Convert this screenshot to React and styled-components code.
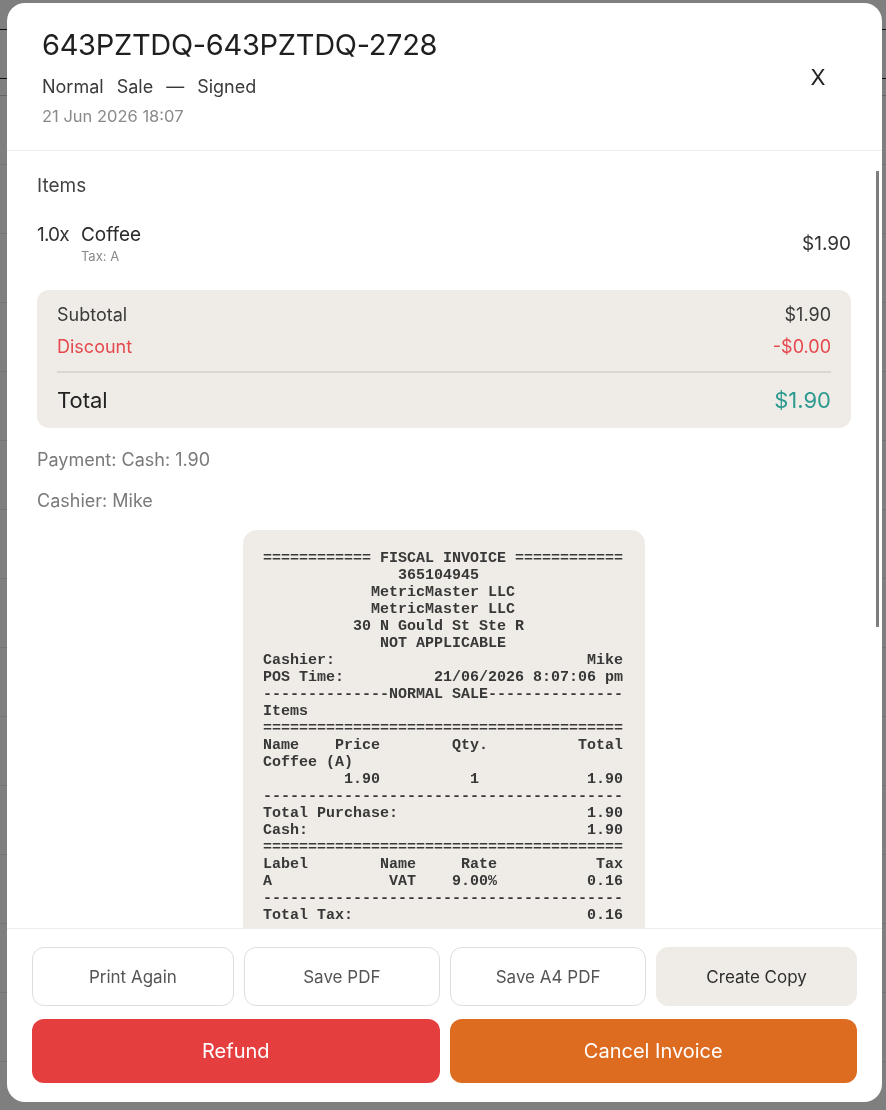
import React from "react";
import styled, { createGlobalStyle } from "styled-components";

const GlobalStyle = createGlobalStyle`
  html, body { margin: 0; padding: 0; }
  body {
    background: #ffffff;
    font-family: Inter, "Noto Sans", sans-serif;
    color: #2d2d2d;
    overflow: hidden;
  }
`;

const Page = styled.div`
  display: flex;
  flex-direction: column;
  height: 1110px;
  background: #ffffff;
`;

const PageRow = styled.div`
  height: ${(p) => p.h}px;
  border-bottom: 1px solid ${(p) => p.line};
  flex-shrink: 0;
`;

const Overlay = styled.div`
  position: fixed;
  inset: 0;
  background: rgba(0, 0, 0, 0.5);
  display: flex;
  align-items: flex-start;
  padding: 3px 4px 0 7px;
`;

const Modal = styled.div`
  width: 875px;
  height: 1099px;
  background: #ffffff;
  border-radius: 18px;
  display: flex;
  flex-direction: column;
  overflow: hidden;
`;

const Header = styled.div`
  display: flex;
  justify-content: space-between;
  align-items: flex-start;
  padding: 22px 44px 0 35px;
  height: 148px;
  box-sizing: border-box;
  border-bottom: 1px solid #ececec;
  flex-shrink: 0;
`;

const HeadText = styled.div`
  display: flex;
  flex-direction: column;
`;

const Title = styled.h1`
  margin: 0;
  font-size: 29px;
  font-weight: 400;
  line-height: 40px;
  color: #1f1f1f;
  letter-spacing: -0.3px;
`;

const Status = styled.div`
  display: flex;
  gap: 13px;
  margin-top: 9px;
  font-size: 18px;
  line-height: 26px;
  color: #3a3a3a;
`;

const DateLine = styled.div`
  margin-top: 5px;
  font-size: 16.5px;
  line-height: 22px;
  color: #8a8a8a;
`;

const CloseButton = styled.button`
  width: 40px;
  height: 40px;
  margin-top: 32px;
  border: none;
  background: transparent;
  font-family: Inter, sans-serif;
  font-size: 22px;
  color: #222;
  cursor: pointer;
  padding: 0;
`;

const BodyFrame = styled.div`
  flex: 1;
  min-height: 0;
  position: relative;
  display: flex;
`;

const Body = styled.div`
  flex: 1;
  overflow-y: auto;
  padding: 22px 31px 20px 30px;
  scrollbar-width: none;
  &::-webkit-scrollbar { display: none; }
`;

const ScrollThumb = styled.div`
  position: absolute;
  right: 3px;
  top: 20px;
  width: 3px;
  height: 456px;
  background: #7d7d7d;
  pointer-events: none;
`;

const SectionLabel = styled.div`
  font-size: 19px;
  line-height: 26px;
  color: #444;
`;

const ItemRow = styled.div`
  display: flex;
  justify-content: space-between;
  align-items: flex-start;
  margin-top: 23px;
`;

const ItemLeft = styled.div`
  display: flex;
  gap: 12px;
`;

const Qty = styled.span`
  font-size: 19px;
  line-height: 26px;
  color: #333;
  letter-spacing: -0.8px;
`;

const ItemName = styled.div`
  display: flex;
  flex-direction: column;
`;

const Name = styled.span`
  font-size: 19px;
  line-height: 26px;
  color: #2a2a2a;
`;

const TaxNote = styled.span`
  font-size: 13px;
  line-height: 16px;
  color: #8a8a8a;
`;

const Price = styled.span`
  font-size: 19px;
  line-height: 26px;
  margin-top: 9px;
  color: #333;
`;

const Summary = styled.div`
  margin-top: 26px;
  background: #efece7;
  border-radius: 12px;
  padding: 9px 20px 11px;
  display: flex;
  flex-direction: column;
`;

const SumRow = styled.div`
  display: flex;
  justify-content: space-between;
  align-items: center;
  font-size: ${(p) => (p.big ? 22 : 18)}px;
  line-height: ${(p) => (p.big ? 34 : 32)}px;
  color: ${(p) => p.color || "#3a3a3a"};
`;

const SumValue = styled.span`
  color: ${(p) => p.color || "inherit"};
`;

const Divider = styled.div`
  height: 2px;
  background: #d9d5d0;
  margin: 8px 0 10px;
`;

const Meta = styled.div`
  font-size: 18px;
  line-height: 26px;
  color: #7a7a7a;
  margin-top: ${(p) => p.mt}px;
`;

const ReceiptWrap = styled.div`
  display: flex;
  justify-content: center;
  margin-top: 16px;
`;

const Receipt = styled.pre`
  margin: 0;
  width: 402px;
  box-sizing: border-box;
  background: #efece7;
  border-radius: 14px;
  padding: 20px 20px 24px;
  font-family: "Liberation Mono", "Courier New", monospace;
  font-size: 15px;
  line-height: 17px;
  color: #383838;
  font-weight: 700;
  white-space: pre;
`;

const Footer = styled.div`
  flex-shrink: 0;
  border-top: 1px solid #ececec;
  padding: 18px 25px 19px;
  display: flex;
  flex-direction: column;
  gap: 13px;
`;

const ButtonRow = styled.div`
  display: flex;
  gap: 10px;
`;

const GhostButton = styled.button`
  flex: ${(p) => p.grow} 1 0;
  min-width: 0;
  height: 59px;
  border-radius: 12px;
  border: 1px solid ${(p) => (p.filled ? "#efece7" : "#dedede")};
  background: ${(p) => (p.filled ? "#efece7" : "#ffffff")};
  font-family: Inter, sans-serif;
  font-size: 17px;
  color: ${(p) => (p.filled ? "#2f2f2f" : "#555")};
  cursor: pointer;
  padding: 0 8px;
`;

const ActionButton = styled.button`
  flex: 1 1 0;
  height: 64px;
  border-radius: 12px;
  border: none;
  background: ${(p) => p.bg};
  color: #ffffff;
  font-family: Inter, sans-serif;
  font-size: 20px;
  cursor: pointer;
`;

const W = 40;
const lr = (l, r) => l + " ".repeat(Math.max(1, W - l.length - r.length)) + r;
const center = (t) => " ".repeat(Math.floor((W - t.length) / 2)) + t;
const cols = (parts) => {
  let s = "";
  parts.forEach(([text, col]) => {
    if (s.length < col) s += " ".repeat(col - s.length);
    s += text;
  });
  return s;
};
const rule = (c) => c.repeat(W);

const receiptLines = [
  "============ FISCAL INVOICE ============",
  center("365104945"),
  center("MetricMaster LLC"),
  center("MetricMaster LLC"),
  center("30 N Gould St Ste R"),
  center("NOT APPLICABLE"),
  lr("Cashier:", "Mike"),
  lr("POS Time:", "21/06/2026 8:07:06 pm"),
  "--------------NORMAL SALE---------------",
  "Items",
  rule("="),
  cols([["Name", 0], ["Price", 8], ["Qty.", 21], ["Total", 35]]),
  "Coffee (A)",
  cols([["1.90", 9], ["1", 23], ["1.90", 36]]),
  rule("-"),
  lr("Total Purchase:", "1.90"),
  lr("Cash:", "1.90"),
  rule("="),
  cols([["Label", 0], ["Name", 13], ["Rate", 22], ["Tax", 37]]),
  cols([["A", 0], ["VAT", 14], ["9.00%", 21], ["0.16", 36]]),
  rule("-"),
  lr("Total Tax:", "0.16"),
  rule("="),
  lr("SDC Time:", "21/06/2026 8:07:07 pm"),
  lr("SDC Invoice No:", "643PZTDQ-2728"),
  lr("Invoice Counter:", "2728/2728NS"),
  rule("="),
  "", "", "", "", "", "", "", "", "", "", "", "", "", "", "", "",
  rule("="),
  center("END OF FISCAL INVOICE"),
  rule("="),
];

export default function App() {
  return (
    <>
      <GlobalStyle />
      <Page>
        <PageRow h={29} line="#202020" />
        <PageRow h={48} line="#202020" />
        <PageRow h={16} line="#c8c8c8" />
        {Array.from({ length: 14 }).map((_, i) => (
          <PageRow key={i} h={68} line="#e6e6e6" />
        ))}
      </Page>
      <Overlay>
        <Modal>
          <Header>
            <HeadText>
              <Title>643PZTDQ-643PZTDQ-2728</Title>
              <Status>
                <span>Normal</span>
                <span>Sale</span>
                <span>—</span>
                <span>Signed</span>
              </Status>
              <DateLine>21 Jun 2026 18:07</DateLine>
            </HeadText>
            <CloseButton aria-label="Close">X</CloseButton>
          </Header>
          <BodyFrame>
            <Body>
              <SectionLabel>Items</SectionLabel>
              <ItemRow>
                <ItemLeft>
                  <Qty>1.0x</Qty>
                  <ItemName>
                    <Name>Coffee</Name>
                    <TaxNote>Tax: A</TaxNote>
                  </ItemName>
                </ItemLeft>
                <Price>$1.90</Price>
              </ItemRow>
              <Summary>
                <SumRow>
                  <span>Subtotal</span>
                  <SumValue>$1.90</SumValue>
                </SumRow>
                <SumRow color="#e5484d">
                  <span>Discount</span>
                  <SumValue>-$0.00</SumValue>
                </SumRow>
                <Divider />
                <SumRow big color="#222">
                  <span>Total</span>
                  <SumValue color="#2c9a8f">$1.90</SumValue>
                </SumRow>
              </Summary>
              <Meta mt={19}>Payment: Cash: 1.90</Meta>
              <Meta mt={15}>Cashier: Mike</Meta>
              <ReceiptWrap>
                <Receipt>{receiptLines.join("\n")}</Receipt>
              </ReceiptWrap>
            </Body>
            <ScrollThumb />
          </BodyFrame>
          <Footer>
            <ButtonRow>
              <GhostButton grow={202}>Print Again</GhostButton>
              <GhostButton grow={196}>Save PDF</GhostButton>
              <GhostButton grow={196}>Save A4 PDF</GhostButton>
              <GhostButton grow={201} filled>Create Copy</GhostButton>
            </ButtonRow>
            <ButtonRow>
              <ActionButton bg="#e53e3e">Refund</ActionButton>
              <ActionButton bg="#dd6b20">Cancel Invoice</ActionButton>
            </ButtonRow>
          </Footer>
        </Modal>
      </Overlay>
    </>
  );
}
